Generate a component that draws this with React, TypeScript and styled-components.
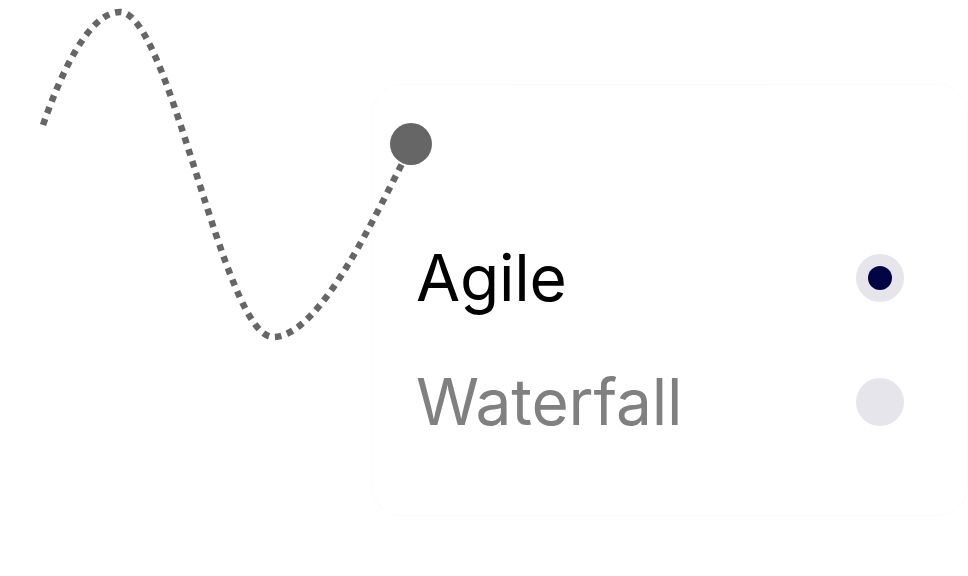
import React from "react";
import styled, { createGlobalStyle } from "styled-components";

const GlobalStyle = createGlobalStyle`
  html, body {
    margin: 0;
    padding: 0;
    background: #ffffff;
    font-family: Inter, "Noto Sans", "Liberation Sans", sans-serif;
  }
`;

const Page = styled.div`
  position: relative;
  width: 968px;
  height: 576px;
  overflow: hidden;
  background: #ffffff;
  display: flex;
  align-items: flex-start;
  padding: 84px 0 0 372px;
  box-sizing: border-box;
`;

const Card = styled.div`
  width: 596px;
  height: 432px;
  box-sizing: border-box;
  border: 1px dotted rgba(0, 0, 0, 0.03);
  border-radius: 30px;
  background: #ffffff;
  padding: 131px 63px 0 43px;
  display: flex;
  flex-direction: column;
`;

const Row = styled.div`
  height: 124px;
  display: flex;
  align-items: center;
  justify-content: space-between;
`;

const Label = styled.span<{ $active: boolean }>`
  font-size: 64px;
  line-height: 1;
  font-weight: 400;
  letter-spacing: -0.2px;
  color: ${(p) => (p.$active ? "#000000" : "#808080")};
`;

const Radio = styled.span<{ $active: boolean }>`
  width: 48px;
  height: 48px;
  border-radius: 50%;
  background: #e6e5ec;
  display: flex;
  align-items: center;
  justify-content: center;
  &::after {
    content: "";
    width: 24px;
    height: 24px;
    border-radius: 50%;
    background: #020444;
    display: ${(p) => (p.$active ? "block" : "none")};
  }
`;

const Curve = styled.svg`
  position: absolute;
  left: 0;
  top: 0;
  width: 968px;
  height: 576px;
  pointer-events: none;
`;

const options = [
  { label: "Agile", active: true },
  { label: "Waterfall", active: false },
];

export default function App() {
  return (
    <>
      <GlobalStyle />
      <Page>
        <Card>
          {options.map((o) => (
            <Row key={o.label}>
              <Label $active={o.active}>{o.label}</Label>
              <Radio $active={o.active} />
            </Row>
          ))}
        </Card>
        <Curve viewBox="0 0 968 576">
          <path
            d="M43 125 C 62 70, 90 12, 120 12 C 170 12, 223 337, 273 337 C 320 337, 375 215, 404 160"
            fill="none"
            stroke="#666666"
            strokeWidth="6.5"
            strokeDasharray="6.5 6"
          />
          <circle cx="411" cy="144" r="21" fill="#666666" />
        </Curve>
      </Page>
    </>
  );
}
